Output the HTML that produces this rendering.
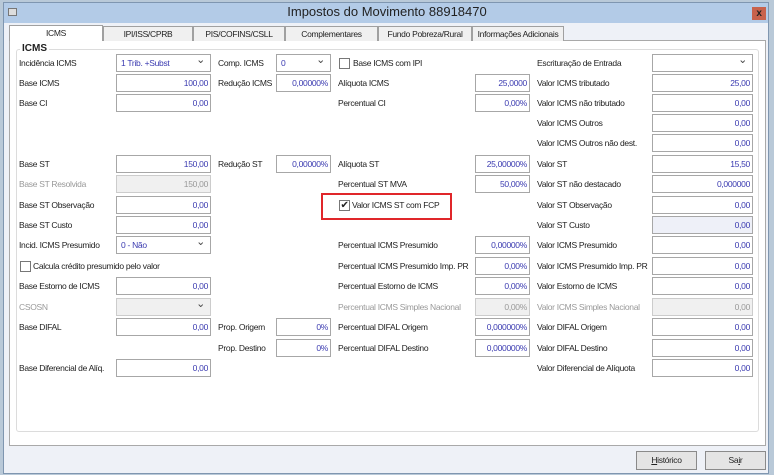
<!DOCTYPE html><html><head><meta charset="utf-8"><style>
*{box-sizing:border-box;margin:0;padding:0}
body{width:774px;height:475px;overflow:hidden;background:#b9c9d8;font-family:"Liberation Sans",sans-serif;font-size:8.5px;letter-spacing:-0.3px;color:#222;position:relative}
.a{position:absolute}
.win{left:3px;top:2px;width:766px;height:472px;background:#eef1f7;border:1px solid #7f96b0}
.title{left:4px;top:3px;width:764px;height:20px;background:#b3cbe7}
.tt{left:0;width:774px;top:4px;text-align:center;font-size:13px;letter-spacing:0;color:#222}
.close{left:752px;top:7px;width:14px;height:13px;background:#c8624c;color:#222;font-size:10px;font-weight:bold;text-align:center;line-height:13px}
.tab{top:26px;height:15px;border:1px solid #a0a0a0;border-bottom:none;background:#f0f0f0;text-align:center;line-height:14px;white-space:nowrap;overflow:hidden}
.panel{left:9px;top:40px;width:757px;height:406px;background:#fff;border:1px solid #a9a9a9}
.grp{left:16px;top:49px;width:743px;height:383px;border:1px solid #dcdcdc;border-radius:3px}
.l{line-height:18px;white-space:nowrap}
.d{color:#999}
.i{height:18px;border:1px solid #a7a7a7;background:#fff;color:#3a3ab0;text-align:right;padding-right:2px;line-height:16px}
.g{background:#f0f0f0;color:#999;border-color:#ccc}
.s{text-align:left;padding-left:4px}
.s:after{content:"⌄";position:absolute;right:5px;top:-3px;color:#444;font-size:11px}
.cb{width:11px;height:11px;border:1px solid #777;background:#fff}
.btn{top:451px;height:19px;border:1px solid #8a8a8a;background:#e4e4e4;text-align:center;line-height:17px}
</style></head><body>
<div class="a win"></div>
<div class="a title"></div>
<div class="a" style="left:8px;top:8px;width:9px;height:8px;background:#ddd;border:1px solid #777"></div>
<div class="a tt">Impostos do Movimento 88918470</div>
<div class="a close">x</div>
<div class="a panel"></div>
<div class="a tab" style="left:9px;width:94px;top:25px;height:16px;background:#fff;z-index:2">ICMS</div>
<div class="a tab" style="left:103px;width:90px">IPI/ISS/CPRB</div>
<div class="a tab" style="left:193px;width:92px">PIS/COFINS/CSLL</div>
<div class="a tab" style="left:285px;width:93px">Complementares</div>
<div class="a tab" style="left:378px;width:94px">Fundo Pobreza/Rural</div>
<div class="a tab" style="left:472px;width:92px">Informações Adicionais</div>
<div class="a grp"></div>
<div class="a" style="left:20px;top:43px;background:#fff;font-weight:bold;font-size:10px;letter-spacing:0;padding:0 2px">ICMS</div>

<div class="a l" style="left:19px;top:54px">Incidência ICMS</div>
<div class="a i s" style="left:116px;top:54px;width:95px">1 Trib. +Subst</div>
<div class="a l" style="left:218px;top:54px">Comp. ICMS</div>
<div class="a i s" style="left:276px;top:54px;width:55px">0</div>
<div class="a cb" style="left:339px;top:58px"></div>
<div class="a l" style="left:353px;top:54px">Base ICMS com IPI</div>
<div class="a l" style="left:537px;top:54px">Escrituração de Entrada</div>
<div class="a i s" style="left:652px;top:54px;width:101px"></div>

<div class="a l" style="left:19px;top:74px">Base ICMS</div>
<div class="a i" style="left:116px;top:74px;width:95px">100,00</div>
<div class="a l" style="left:218px;top:74px">Redução ICMS</div>
<div class="a i" style="left:276px;top:74px;width:55px">0,00000%</div>
<div class="a l" style="left:338px;top:74px">Alíquota ICMS</div>
<div class="a i" style="left:475px;top:74px;width:55px">25,0000</div>
<div class="a l" style="left:537px;top:74px">Valor ICMS tributado</div>
<div class="a i" style="left:652px;top:74px;width:101px">25,00</div>

<div class="a l" style="left:19px;top:94px">Base CI</div>
<div class="a i" style="left:116px;top:94px;width:95px">0,00</div>
<div class="a l" style="left:338px;top:94px">Percentual CI</div>
<div class="a i" style="left:475px;top:94px;width:55px">0,00%</div>
<div class="a l" style="left:537px;top:94px">Valor ICMS não tributado</div>
<div class="a i" style="left:652px;top:94px;width:101px">0,00</div>

<div class="a l" style="left:537px;top:114px">Valor ICMS Outros</div>
<div class="a i" style="left:652px;top:114px;width:101px">0,00</div>
<div class="a l" style="left:537px;top:134px">Valor ICMS Outros não dest.</div>
<div class="a i" style="left:652px;top:134px;width:101px">0,00</div>

<div class="a l" style="left:19px;top:155px">Base ST</div>
<div class="a i" style="left:116px;top:155px;width:95px">150,00</div>
<div class="a l" style="left:218px;top:155px">Redução ST</div>
<div class="a i" style="left:276px;top:155px;width:55px">0,00000%</div>
<div class="a l" style="left:338px;top:155px">Alíquota ST</div>
<div class="a i" style="left:475px;top:155px;width:55px">25,00000%</div>
<div class="a l" style="left:537px;top:155px">Valor ST</div>
<div class="a i" style="left:652px;top:155px;width:101px">15,50</div>

<div class="a l d" style="left:19px;top:175px">Base ST Resolvida</div>
<div class="a i g" style="left:116px;top:175px;width:95px">150,00</div>
<div class="a l" style="left:338px;top:175px">Percentual ST MVA</div>
<div class="a i" style="left:475px;top:175px;width:55px">50,00%</div>
<div class="a l" style="left:537px;top:175px">Valor ST não destacado</div>
<div class="a i" style="left:652px;top:175px;width:101px">0,000000</div>

<div class="a l" style="left:19px;top:196px">Base ST Observação</div>
<div class="a i" style="left:116px;top:196px;width:95px">0,00</div>
<div class="a" style="left:321px;top:193px;width:131px;height:27px;border:2px solid #e0262a"></div>
<div class="a cb" style="left:339px;top:200px;font-size:10px;line-height:9px;text-align:center">✔</div>
<div class="a l" style="left:352px;top:196px">Valor ICMS ST com FCP</div>
<div class="a l" style="left:537px;top:196px">Valor ST Observação</div>
<div class="a i" style="left:652px;top:196px;width:101px">0,00</div>

<div class="a l" style="left:19px;top:216px">Base ST Custo</div>
<div class="a i" style="left:116px;top:216px;width:95px">0,00</div>
<div class="a l" style="left:537px;top:216px">Valor ST Custo</div>
<div class="a i" style="left:652px;top:216px;width:101px;background:#eef0f8">0,00</div>

<div class="a l" style="left:19px;top:236px">Incid. ICMS Presumido</div>
<div class="a i s" style="left:116px;top:236px;width:95px">0 - Não</div>
<div class="a l" style="left:338px;top:236px">Percentual ICMS Presumido</div>
<div class="a i" style="left:475px;top:236px;width:55px">0,00000%</div>
<div class="a l" style="left:537px;top:236px">Valor ICMS Presumido</div>
<div class="a i" style="left:652px;top:236px;width:101px">0,00</div>

<div class="a cb" style="left:20px;top:261px"></div>
<div class="a l" style="left:33px;top:257px">Calcula crédito presumido pelo valor</div>
<div class="a l" style="left:338px;top:257px">Percentual ICMS Presumido Imp. PR</div>
<div class="a i" style="left:475px;top:257px;width:55px">0,00%</div>
<div class="a l" style="left:537px;top:257px">Valor ICMS Presumido Imp. PR</div>
<div class="a i" style="left:652px;top:257px;width:101px">0,00</div>

<div class="a l" style="left:19px;top:277px">Base Estorno de ICMS</div>
<div class="a i" style="left:116px;top:277px;width:95px">0,00</div>
<div class="a l" style="left:338px;top:277px">Percentual Estorno de ICMS</div>
<div class="a i" style="left:475px;top:277px;width:55px">0,00%</div>
<div class="a l" style="left:537px;top:277px">Valor Estorno de ICMS</div>
<div class="a i" style="left:652px;top:277px;width:101px">0,00</div>

<div class="a l d" style="left:19px;top:298px">CSOSN</div>
<div class="a i g s" style="left:116px;top:298px;width:95px"></div>
<div class="a l d" style="left:338px;top:298px">Percentual ICMS Simples Nacional</div>
<div class="a i g" style="left:475px;top:298px;width:55px">0,00%</div>
<div class="a l d" style="left:537px;top:298px">Valor ICMS Simples Nacional</div>
<div class="a i g" style="left:652px;top:298px;width:101px">0,00</div>

<div class="a l" style="left:19px;top:318px">Base DIFAL</div>
<div class="a i" style="left:116px;top:318px;width:95px">0,00</div>
<div class="a l" style="left:218px;top:318px">Prop. Origem</div>
<div class="a i" style="left:276px;top:318px;width:55px">0%</div>
<div class="a l" style="left:338px;top:318px">Percentual DIFAL Origem</div>
<div class="a i" style="left:475px;top:318px;width:55px">0,000000%</div>
<div class="a l" style="left:537px;top:318px">Valor DIFAL Origem</div>
<div class="a i" style="left:652px;top:318px;width:101px">0,00</div>

<div class="a l" style="left:218px;top:339px">Prop. Destino</div>
<div class="a i" style="left:276px;top:339px;width:55px">0%</div>
<div class="a l" style="left:338px;top:339px">Percentual DIFAL Destino</div>
<div class="a i" style="left:475px;top:339px;width:55px">0,000000%</div>
<div class="a l" style="left:537px;top:339px">Valor DIFAL Destino</div>
<div class="a i" style="left:652px;top:339px;width:101px">0,00</div>

<div class="a l" style="left:19px;top:359px">Base Diferencial de Alíq.</div>
<div class="a i" style="left:116px;top:359px;width:95px">0,00</div>
<div class="a l" style="left:537px;top:359px">Valor Diferencial de Alíquota</div>
<div class="a i" style="left:652px;top:359px;width:101px">0,00</div>

<div class="a btn" style="left:636px;width:61px"><u>H</u>istórico</div>
<div class="a btn" style="left:705px;width:61px">Sa<u>i</u>r</div>
</body></html>
